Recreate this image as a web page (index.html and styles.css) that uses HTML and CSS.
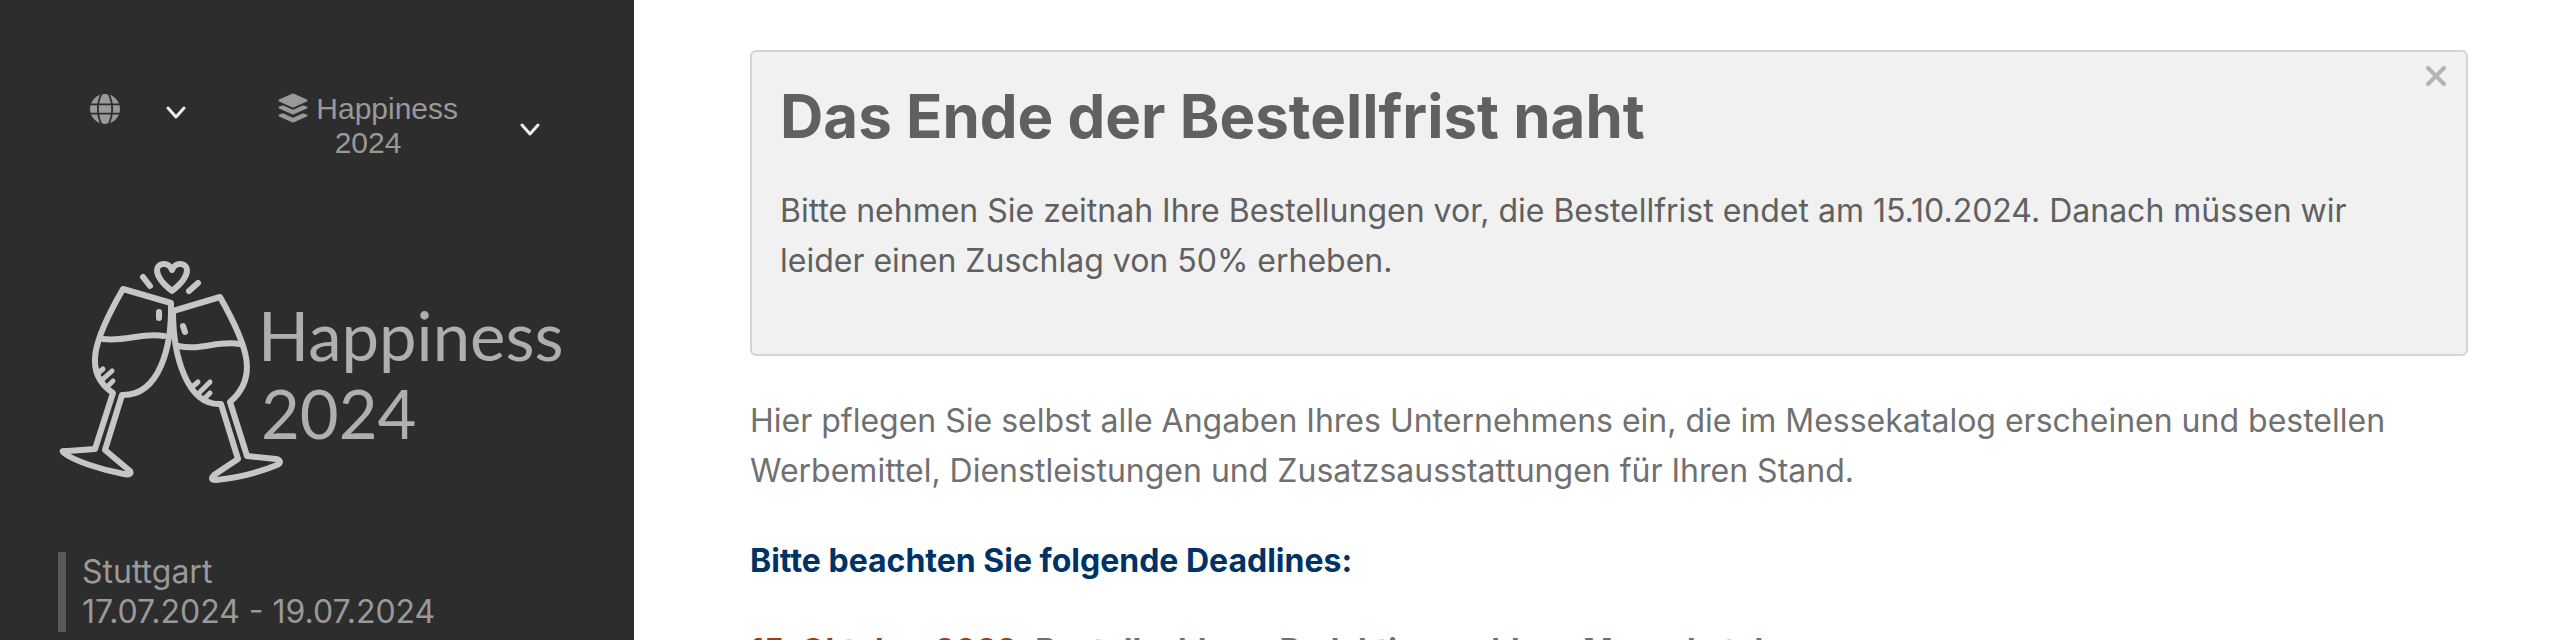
FILE: index.html
```
<!DOCTYPE html>
<html lang="de">
<head>
	<meta charset="utf-8">
	<title>Happiness 2024</title>
	<link rel="stylesheet" href="styles.css">
</head>
<body>
	<!-- Sidebar -->
	<aside class="sidebar">
		<nav class="topnav">
			<button type="button" class="dropdown" aria-label="Sprache">
				<svg class="icon" viewBox="0 0 30 30">
					<circle cx="15" cy="15" r="15" fill="#999"/>
					<path d="M0 10.300h30M0 19.700h30M12 -1C6.500 8 6.500 22 12 31M18 -1C23.500 8 23.500 22 18 31" fill="none" stroke="#2d2d2d" stroke-width="1.800"/>
				</svg>
				<svg class="chevron" viewBox="0 0 20 14"><path d="M2 2l8 9 8-9"/></svg>
			</button>
			<button type="button" class="dropdown dropdown-event">
				<span class="event-name"><svg class="icon" viewBox="0 0 30 30">
					<g fill="#999" stroke="#999" stroke-width="2" stroke-linejoin="round">
						<path d="M15 1.500L28.500 7.500 15 13.500 1.500 7.500z"/>
						<path d="M1.500 14.500L5 13.500l10 4.500L25 13.500l3.500 1L15 20.500z"/>
						<path d="M1.500 22.500L5 21.500l10 4.500 10-4.500 3.500 1L15 28.500z"/>
					</g>
				</svg> Happiness 2024</span>
				<svg class="chevron" viewBox="0 0 20 14"><path d="M2 2l8 9 8-9"/></svg>
			</button>
		</nav>

		<svg class="logo" viewBox="-2 0 516 228" role="img" aria-label="Happiness 2024">
			<g fill="none" stroke="#c6c6c6" stroke-width="6" stroke-linecap="round" stroke-linejoin="round">
				<!-- heart -->
				<path d="M112 35C103 28 97 20 97 14C97 7 109 5 112 14C115 5 127 7 127 14C127 20 121 28 112 35z"/>
				<path d="M83 21l7 9M138 27l-9 8"/>
				<!-- left glass -->
				<path d="M63 33L111 47C112 90 100 140 62 139L45 194L70 215C72 218 69 219 64 218C42 214 14 205 4 197C1 194 3 195 8 195L35 193L53 137C23 117 33 85 63 33z"/>
				<path d="M43 83C66 86 82 76 104 80M99 56v6" />
				<path d="M43 113l-6 5M52 115l-10 9M53 125l-5 5" stroke-width="5"/>
				<!-- right glass -->
				<path d="M113 55L160 41C189 92 198 122 170 146L187 200L216 203C221 204 221 207 217 209C200 216 177 222 156 224C151 224 151 222 154 219L178 203L161 148C127 150 113 100 113 55z"/>
				<path d="M118 90C142 95 157 84 180 88M123 70l2 6"/>
				<path d="M138 126l-6 5M150 126l-12 12M150 137l-5 5" stroke-width="5"/>
			</g>
			<text x="198" y="105">Happiness</text>
			<text x="201" y="183">2024</text>
		</svg>

		<address class="event-info">
			Stuttgart<br>
			17.07.2024 - 19.07.2024
		</address>
	</aside>

	<!-- Inhalt -->
	<main class="content">
		<section class="notice" id="notice">
			<button type="button" class="close" aria-label="Schließen" onclick="document.getElementById('notice').style.display='none'">
				<svg viewBox="0 0 20 20"><path d="M2 2l16 16M18 2L2 18"/></svg>
			</button>
			<h1>Das Ende der Bestellfrist naht</h1>
			<p>Bitte nehmen Sie zeitnah Ihre Bestellungen vor, die Bestellfrist endet am 15.10.2024. Danach müssen wir leider einen Zuschlag von 50% erheben.</p>
		</section>
		<p>Hier pflegen Sie selbst alle Angaben Ihres Unternehmens ein, die im Messekatalog erscheinen und bestellen Werbemittel, Dienstleistungen und Zusatzsausstattungen für Ihren Stand.</p>
		<h2>Bitte beachten Sie folgende Deadlines:</h2>
		<p class="deadline"><span class="date">15. Oktober 2022:</span> Bestellschluss, Redaktionsschluss Messekatalog</p>
	</main>
</body>
</html>
```
FILE: styles.css
```
* { box-sizing: border-box; }

body {
	margin: 0;
	display: flex;
	height: 100vh;
	overflow: hidden;
	background-color: #fff;
	color: #707070;
	font-family: Inter, "Liberation Sans", sans-serif;
	font-size: 32px;
	line-height: 50px;
}

button { border: 0; padding: 0; background: none; color: inherit; font: inherit; cursor: pointer; }

/* Sidebar */
.sidebar {
	flex: 0 0 634px;
	padding: 92px 60px 0 58px;
	background-color: #2d2d2d;
	color: #999;
}
.topnav { display: flex; justify-content: space-between; padding: 0 34px 0 32px; }
.dropdown { display: flex; align-items: center; align-self: flex-start; gap: 46px; min-height: 34px; line-height: 34px; }
.dropdown-event { gap: 52px; }
.event-name { width: 200px; font-family: "Liberation Sans", Arial, sans-serif; font-size: 30px; }
.icon { width: 30px; height: 30px; vertical-align: -4px; }
.chevron { width: 20px; height: 14px; margin-top: 8px; }
.chevron path { fill: none; stroke: #eee; stroke-width: 3; stroke-linecap: round; stroke-linejoin: round; }

.logo { display: block; width: 100%; margin-top: 96px; overflow: visible; }
.logo text { fill: #afafaf; font-family: Lato, sans-serif; font-size: 67px; }

.event-info {
	margin-top: 68px;
	padding-left: 16px;
	border-left: 8px solid #595959;
	font-style: normal;
	line-height: 40px;
}

/* Inhalt */
.content { flex: 1; padding: 50px 92px 0 116px; }
.content p { margin: 0 0 40px; }
.notice {
	position: relative;
	margin-bottom: 40px;
	padding: 28px;
	border: 2px solid #d4d4d4;
	border-radius: 6px;
	background-color: #f1f1f1;
	color: #606060;
}
.notice h1 { margin: 0 0 34px; font-size: 60px; line-height: 72px; }
.close { position: absolute; top: 14px; right: 20px; width: 20px; height: 20px; }
.close svg { display: block; }
.close path { fill: none; stroke: #b4b4b4; stroke-width: 4; stroke-linecap: round; }
.content h2 { margin: 0 0 40px; color: #003365; font-size: 32px; line-height: 50px; }
.content .deadline { font-weight: bold; }
.date { color: #a33b0f; }
```
